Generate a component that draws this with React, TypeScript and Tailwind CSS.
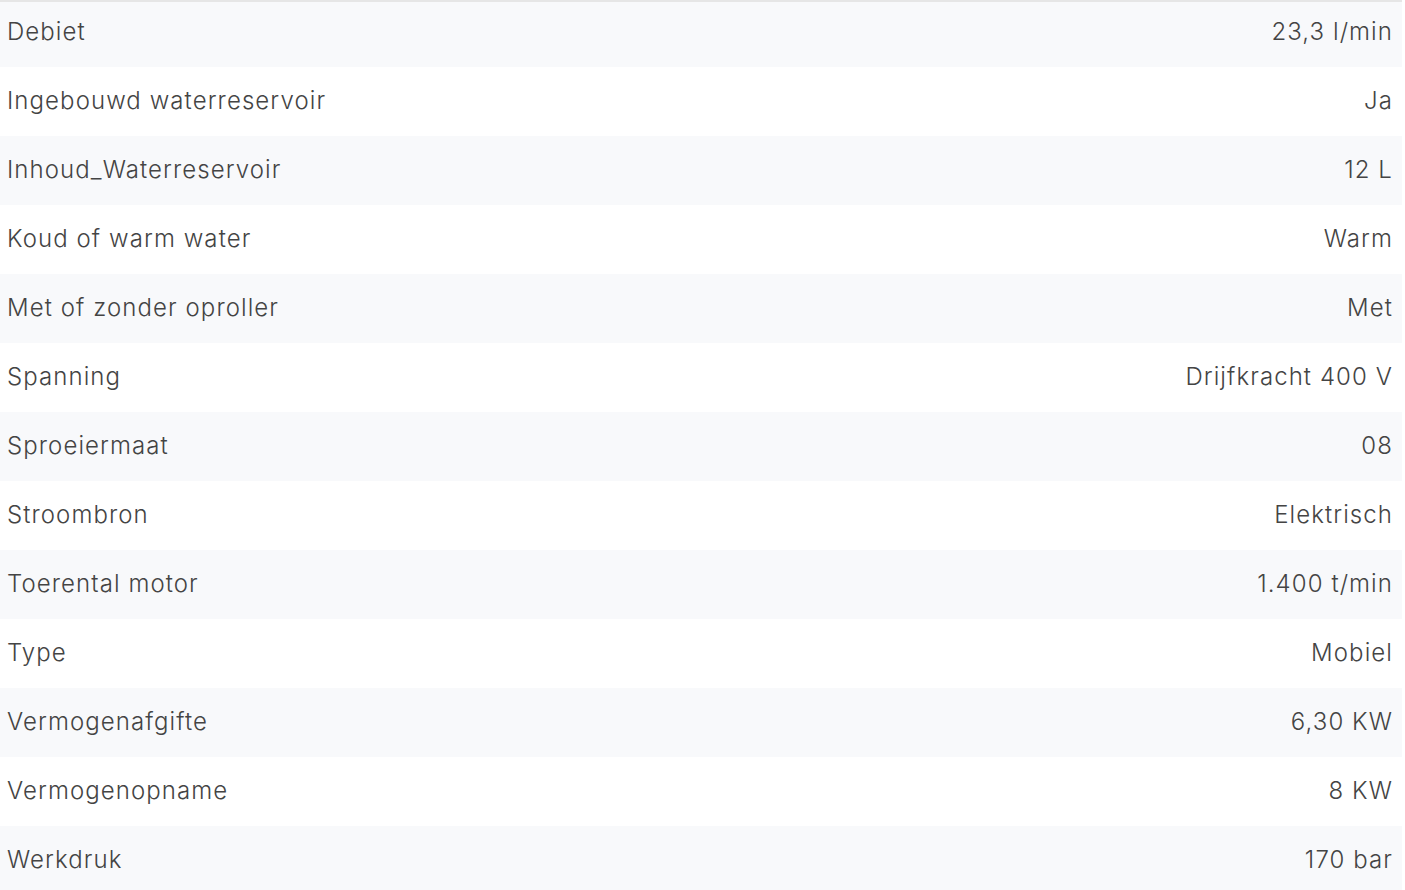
import React from "react";

const rows: [string, string][] = [
  ["Debiet", "23,3 l/min"],
  ["Ingebouwd waterreservoir", "Ja"],
  ["Inhoud_Waterreservoir", "12 L"],
  ["Koud of warm water", "Warm"],
  ["Met of zonder oproller", "Met"],
  ["Spanning", "Drijfkracht 400 V"],
  ["Sproeiermaat", "08"],
  ["Stroombron", "Elektrisch"],
  ["Toerental motor", "1.400 t/min"],
  ["Type", "Mobiel"],
  ["Vermogenafgifte", "6,30 KW"],
  ["Vermogenopname", "8 KW"],
  ["Werkdruk", "170 bar"],
];

export default function App() {
  return (
    <div className="w-[1405px] h-[890px] overflow-hidden bg-white" style={{ fontFamily: "Inter, 'Noto Sans', sans-serif" }}>
      <div className="w-[1402px] border-t-2 border-[#e6e6e6] text-[24px] font-light text-[#444444] tracking-[0.045em]">
        {rows.map(([k, v], i) => (
          <div
            key={k}
            className={`flex items-center justify-between pl-[7px] pr-[9px] ${i === 0 ? "h-[65px] pb-[5px]" : "h-[69px] pb-[1px]"} ${i % 2 === 0 ? "bg-[#f8f9fb]" : "bg-white"}`}
          >
            <span>{k}</span>
            <span>{v}</span>
          </div>
        ))}
      </div>
    </div>
  );
}
